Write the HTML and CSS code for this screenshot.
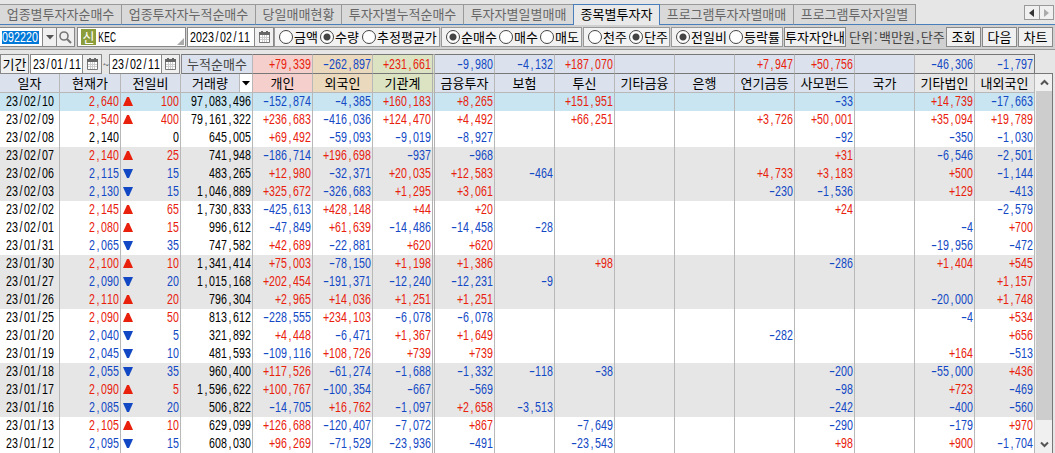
FILE: index.html
```html
<!DOCTYPE html>
<html lang="ko">
<head>
    <meta charset="UTF-8">
    <title>종목별투자자</title>
    <link rel="stylesheet" href="styles.css">
</head>
<body>
    <div class="tabs">
        <div class="tab t1">업종별투자자순매수</div>
        <div class="tab t2">업종투자자누적순매수</div>
        <div class="tab t3">당일매매현황</div>
        <div class="tab t4">투자자별누적순매수</div>
        <div class="tab t5">투자자별일별매매</div>
        <div class="tab t6 active">종목별투자자</div>
        <div class="tab t7">프로그램투자자별매매</div>
        <div class="tab t8">프로그램투자자일별</div>
        <div class="tab-fill">
            <div class="tab-nav">
                <span><svg width="5" height="8"><path d="M5 0V8L0 4z" fill="#333"/></svg></span>
                <span><svg width="5" height="8"><path d="M0 0V8L5 4z" fill="#aaa"/></svg></span>
            </div>
        </div>
    </div>

    <div class="toolbar">
        <div class="box code"><span class="selected"><span class="num" data-num="092220"></span></span></div>
        <div class="box drop"><svg width="8" height="5"><path d="M0 0H8L4 4.5z" fill="#555"/></svg></div>
        <div class="box search"><svg width="13" height="13"><circle cx="5" cy="5" r="4" fill="none" stroke="#777" stroke-width="1.6"/><path d="M8 8L12 12" stroke="#777" stroke-width="2.2"/></svg></div>
        <div class="box name"><span class="badge">신</span><span class="num latin" data-num="KEC"></span><i class="corner"></i></div>
        <div class="box date"><span class="num" data-num="2023/02/11"></span></div>
        <div class="box cal"><svg width="11" height="12"><use href="#calendar"/></svg></div>

        <div class="group g1">
            <label class="radio r41">금액</label><label class="radio r42 on">수량</label><label class="radio">추정평균가</label>
        </div>
        <div class="group g2">
            <label class="radio r53 on">순매수</label><label class="radio r41">매수</label><label class="radio">매도</label>
        </div>
        <div class="group g3">
            <label class="radio r41">천주</label><label class="radio on">단주</label>
        </div>
        <div class="group g4">
            <label class="radio r53 on">전일비</label><label class="radio">등락률</label>
        </div>
        <div class="btn info">투자자안내</div>
        <div class="unit"><span>단위</span><span class="half">:</span><span>백만원</span><span class="half">,</span><span>단주</span></div>
        <div class="btn">조회</div>
        <div class="btn">다음</div>
        <div class="btn last">차트</div>
    </div>

    <div class="content">
        <table class="grid">
            <colgroup>
                <col class="w60"><col class="w61"><col class="w60"><col class="w72">
                <col class="w60"><col class="w60"><col class="w62"><col class="w60">
                <col class="w60"><col class="w60"><col class="w60"><col class="w60">
                <col class="w60"><col class="w60"><col class="w60"><col class="w60"><col class="w60">
            </colgroup>
            <thead>
                <tr class="total" id="total">
                    <td colspan="3" class="period">
                        <div class="period-row">
                            <div class="btn term">기간</div>
                            <div class="box pdate"><span class="num" data-num="23/01/11"></span></div>
                            <div class="box pcal"><svg width="11" height="12"><use href="#calendar"/></svg></div>
                            <span class="tilde">~</span>
                            <div class="box pdate"><span class="num" data-num="23/02/11"></span></div>
                            <div class="box pcal"><svg width="11" height="12"><use href="#calendar"/></svg></div>
                        </div>
                    </td>
                    <td class="sum-label">누적순매수</td>
                </tr>
                <tr class="head">
                    <th>일자</th><th>현재가</th><th>전일비</th>
                    <th class="volume"><div><span>거래량</span><b><svg width="8" height="5"><path d="M0 0H8L4 4.5z"/></svg></b></div></th>
                    <th class="pink">개인</th><th class="tan">외국인</th><th class="green">기관계</th>
                    <th>금융투자</th><th>보험</th><th>투신</th><th>기타금융</th><th>은행</th>
                    <th>연기금등</th><th>사모펀드</th><th>국가</th>
                    <th class="gray">기타법인</th><th class="gray">내외국인</th>
                </tr>
            </thead>
            <tbody id="rows"></tbody>
        </table>
        <div class="scroll">
            <div class="arrow"><svg width="9" height="7"><path d="M1 5.5L4.5 2L8 5.5" fill="none" stroke="#555" stroke-width="2"/></svg></div>
            <div class="thumb"></div>
            <div class="arrow down"><svg width="9" height="7"><path d="M1 1.5L4.5 5L8 1.5" fill="none" stroke="#555" stroke-width="2"/></svg></div>
        </div>
    </div>

    <svg class="defs" width="0" height="0">
        <symbol id="calendar" viewBox="0 0 11 12">
            <path d="M.5 2.5H10.5V11.5H.5z" fill="#fff" stroke="#777"/>
            <path d="M0 1H11V4H0zM2 0H4V2H2zM7 0H9V2H7z" fill="#666"/>
            <path d="M3.5 4V11M5.5 4V11M7.5 4V11M1 6.5H10M1 8.5H10" stroke="#ccc"/>
        </symbol>
    </svg>
    <script src="script.js"></script>
</body>
</html>
```
FILE: styles.css
```css
* {
    box-sizing: border-box;
}

body {
    margin: 0;
    width: 1055px;
    height: 453px;
    overflow: hidden;
    background: #e6e6e6;
    color: #000;
    font-family: "Noto Sans CJK KR", sans-serif;
    font-size: 13px;
    line-height: 18px;
    white-space: nowrap;
}

svg {
    display: block;
}

.defs {
    position: absolute;
}

/* tabs */
.tabs {
    display: flex;
    height: 25px;
    padding-top: 4px;
}

.tab {
    height: 21px;
    border-top: 1px solid #999;
    border-right: 1px solid #999;
    border-bottom: 1px solid #4a7ebb;
    background: #d9d9d9;
    color: #666;
    text-align: center;
}

.t1 { width: 122px; }
.t2 { width: 134px; }
.t3 { width: 86px; }
.t4 { width: 122px; }
.t5 { width: 109px; border-right: 0; }
.t6 { width: 87px; }
.t7 { width: 134px; }
.t8 { width: 122px; }

.tab.active {
    border: 1px solid #4a7ebb;
    border-bottom: 0;
    background: #e9e9e9;
    color: #000;
}

.tab-fill {
    flex: 1;
    display: flex;
    justify-content: flex-end;
    padding: 1px 1px 0 0;
    border-bottom: 1px solid #4a7ebb;
}

.tab-nav {
    display: flex;
    width: 30px;
    height: 15px;
    border: 1px solid #999;
    background: #f0f0f0;
}

.tab-nav span {
    flex: 1;
    display: flex;
    align-items: center;
    justify-content: center;
}

.tab-nav span + span {
    border-left: 1px solid #999;
}

/* digits sit in 6px wide cells */
.num {
    display: inline-flex;
    font-family: "Liberation Sans", sans-serif;
    font-size: 14.4px;
}

.num i {
    width: 6px;
    display: flex;
    justify-content: center;
    font-style: normal;
    transform: scaleX(0.74);
}

.num .minus {
    transform: scaleX(1.25);
}

.latin i {
    transform: scaleX(0.58);
}

/* toolbar */
.toolbar {
    display: flex;
    height: 25px;
    padding-top: 2px;
    background: #d0d0d0;
    border-bottom: 1px solid #999;
}

.box {
    display: flex;
    align-items: center;
    height: 20px;
    border: 1px solid #888;
    background: #fff;
}

.code {
    width: 43px;
    border-left: 0;
    padding-left: 2px;
}

.selected {
    display: flex;
    height: 13px;
    align-items: center;
    background: #0078d7;
    color: #fff;
    width: 37px;
}

.drop {
    width: 14px;
    border-left: 0;
    justify-content: center;
    background: #f0f0f0;
}

.search {
    width: 18px;
    border-left: 0;
    margin-right: 2px;
    justify-content: center;
    background: #f0f0f0;
}

.name {
    width: 109px;
    padding-left: 3px;
    position: relative;
}

.badge {
    width: 15px;
    height: 16px;
    margin-right: 2px;
    background: #8c9e3c;
    color: #fff;
    line-height: 15px;
    text-align: center;
}

.corner {
    position: absolute;
    right: 1px;
    bottom: 1px;
    border-left: 7px solid transparent;
    border-bottom: 7px solid #aaa;
}

.date {
    width: 68px;
    margin-left: 1px;
    padding-left: 2px;
}

.cal {
    width: 19px;
    border-left: 0;
    background: #f0f0f0;
    justify-content: center;
}

.group {
    display: flex;
    align-items: center;
    height: 20px;
    padding-left: 4px;
    margin-right: 1px;
    border: 1px solid #999;
    background: #f2f2f2;
}

.g1 { width: 166px; }
.g2 { width: 141px; }
.g3 { width: 87px; }
.g4 { width: 112px; }

.radio {
    display: flex;
    align-items: center;
    height: 18px;
}

.r41 { width: 41px; }
.r42 { width: 42px; }
.r53 { width: 53px; }

.radio::before {
    content: "";
    flex: none;
    width: 12px;
    height: 12px;
    margin-right: 1px;
    border: 1px solid #444;
    border-radius: 50%;
    background: #fff;
}

.radio.on::before {
    background: radial-gradient(circle, #444 3px, #fff 4px);
}

.btn {
    width: 35px;
    height: 20px;
    margin-right: 1px;
    border: 1px solid #888;
    background: #f0f0f0;
    text-align: center;
}

.info {
    width: 62px;
}

.last {
    margin-right: 0;
}

.unit {
    display: flex;
    width: 99px;
    padding-left: 2px;
    color: #444;
    line-height: 20px;
}

.half {
    width: 6px;
    text-align: center;
}

/* table */
.content {
    display: flex;
    align-items: flex-start;
    padding-top: 4px;
}

.grid {
    width: 1035px;
    table-layout: fixed;
    border-collapse: separate;
    border-spacing: 0;
}

.w60 { width: 60px; }
.w61 { width: 61px; }
.w62 { width: 62px; }
.w72 { width: 72px; }

td, th {
    height: 18px;
    padding: 0 1.5px 0 0;
    border-right: 1px solid #b8b8b8;
    font-weight: normal;
    text-align: right;
    line-height: 18px;
    overflow: hidden;
}

td .num, td > div {
    vertical-align: top;
}

tbody .num {
    line-height: 16px;
}

tr > .double {
    border-right: 3px double #b0b0b0;
}

.total td {
    height: 20px;
    border-top: 1px solid #777;
    border-bottom: 1px solid #777;
    background: #dbe2ed;
}

.total td:last-child {
    border-right-color: #777;
}

.head th {
    height: 19px;
    padding: 0;
    border-bottom: 1px solid #b8b8b8;
    background: #dbe2ed;
    text-align: center;
}

.total .period {
    padding: 0;
    border: 0;
    background: #e6e6e6;
}

.period-row {
    display: flex;
}

.term {
    width: 29px;
}

.pdate {
    width: 53px;
    padding-left: 2px;
}

.pcal {
    width: 19px;
    border-left: 0;
    background: #f0f0f0;
    justify-content: center;
}

.pcal:last-child {
    width: 18px;
}

.tilde {
    width: 7px;
    color: #444;
    font-size: 11px;
    line-height: 20px;
}

.total .sum-label {
    color: #444;
    text-align: center;
    padding: 0;
    border-left: 1px solid #888;
}

.volume div {
    display: flex;
    height: 18px;
}

.volume span {
    flex: 1;
}

.volume b {
    display: flex;
    width: 13px;
    align-items: center;
    justify-content: center;
    background: #fff;
    border-left: 1px solid #b8b8b8;
}

.grid .pink { background: #f5cfcb; }
.grid .tan { background: #ebd9bd; }
.grid .green { background: #dbe3c2; }
.grid .gray { background: #e6e6e6; }

tbody tr { background: #fff; }
tbody tr.shade { background: #e6e6e6; }
tbody tr.current { background: #c8e5f1; }

tbody td:first-child {
    padding-right: 5px;
}

.up { color: #e8200c; }
.down-value { color: #1248c4; }

.change {
    display: flex;
    height: 18px;
    justify-content: space-between;
    padding-left: 2px;
}

.change::before {
    content: "";
    width: 10px;
    height: 9px;
    margin-top: 4px;
}

.up .change::before {
    background: #e8200c;
    clip-path: polygon(40% 0, 60% 0, 100% 100%, 0 100%);
}

.down-value .change::before {
    background: #1248c4;
    clip-path: polygon(0 0, 100% 0, 60% 100%, 40% 100%);
}

/* scrollbar */
.scroll {
    width: 18px;
    height: 380px;
    margin-top: 19px;
    padding-left: 1px;
    border-top: 1px solid #777;
    border-right: 1px solid #777;
    background: #f0f0f0;
}

.arrow {
    display: flex;
    height: 17px;
    align-items: center;
    justify-content: center;
}

.thumb {
    height: 329px;
    background: #cdcdcd;
}

.arrow.down {
    margin-top: 16px;
}
```
FILE: script.js
```js
const totals = ["+79,339", "-262,897", "+231,661", "-9,980", "-4,132", "+187,070", "", "", "+7,947", "+50,756", "", "-46,306", "-1,797"];

// date, price, direction, change, volume, then 13 investor columns
const data = `
23/02/10|2,640|u|100|97,083,496|-152,874|-4,385|+160,183|+8,265||+151,951||||-33||+14,739|-17,663
23/02/09|2,540|u|400|79,161,322|+236,683|-416,036|+124,470|+4,492||+66,251|||+3,726|+50,001||+35,094|+19,789
23/02/08|2,140||0|645,005|+69,492|-59,093|-9,019|-8,927||||||-92||-350|-1,030
23/02/07|2,140|u|25|741,948|-186,714|+196,698|-937|-968||||||+31||-6,546|-2,501
23/02/06|2,115|d|15|483,265|+12,980|-32,371|+20,035|+12,583|-464||||+4,733|+3,183||+500|-1,144
23/02/03|2,130|d|15|1,046,889|+325,672|-326,683|+1,295|+3,061|||||-230|-1,536||+129|-413
23/02/02|2,145|u|65|1,730,833|-425,613|+428,148|+44|+20||||||+24|||-2,579
23/02/01|2,080|u|15|996,612|-47,849|+61,639|-14,486|-14,458|-28|||||||-4|+700
23/01/31|2,065|d|35|747,582|+42,689|-22,881|+620|+620||||||||-19,956|-472
23/01/30|2,100|u|10|1,341,414|+75,003|-78,150|+1,198|+1,386||+98||||-286||+1,404|+545
23/01/27|2,090|d|20|1,015,168|+202,454|-191,371|-12,240|-12,231|-9||||||||+1,157
23/01/26|2,110|u|20|796,304|+2,965|+14,036|+1,251|+1,251||||||||-20,000|+1,748
23/01/25|2,090|u|50|813,612|-228,555|+234,103|-6,078|-6,078||||||||-4|+534
23/01/20|2,040|d|5|321,892|+4,448|-6,471|+1,367|+1,649|||||-282||||+656
23/01/19|2,045|d|10|481,593|-109,116|+108,726|+739|+739||||||||+164|-513
23/01/18|2,055|d|35|960,400|+117,526|-61,274|-1,688|-1,332|-118|-38||||-200||-55,000|+436
23/01/17|2,090|u|5|1,596,622|+100,767|-100,354|-667|-569||||||-98||+723|-469
23/01/16|2,085|d|20|506,822|-14,705|+16,762|-1,097|+2,658|-3,513|||||-242||-400|-560
23/01/13|2,105|u|10|629,099|+126,688|-120,407|-7,072|+867||-7,649||||-290||-179|+970
23/01/12|2,095|d|15|608,030|+96,269|-71,529|-23,936|-491||-23,543||||+98||+900|-1,704
`.trim().split("\n").map(line => line.split("|"));

function chars(text) {
    return [...text].map(c => `<i${c === "-" ? ' class="minus"' : ""}>${c}</i>`).join("");
}

function num(text) {
    return text ? `<span class="num">${chars(text)}</span>` : "";
}

function color(value) {
    if (value[0] === "+") return "up";
    if (value[0] === "-") return "down-value";
    return "";
}

document.querySelectorAll("[data-num]").forEach(el => {
    el.innerHTML = chars(el.dataset.num);
});

const columnClass = ["pink", "tan", "green double", "", "", "", "", "", "", "", "", "gray", "gray"];
const heads = document.querySelectorAll(".head th");
heads[6].classList.add("double");

document.getElementById("total").insertAdjacentHTML("beforeend",
    totals.map((v, i) => `<td class="${columnClass[i]} ${color(v)}">${num(v)}</td>`).join(""));

document.getElementById("rows").innerHTML = data.map((row, n) => {
    const [date, price, dir, change, volume, ...values] = row;
    const trend = dir === "u" ? "up" : dir === "d" ? "down-value" : "";
    const rowClass = n === 0 ? "current" : Math.floor(n / 3) % 2 ? "shade" : "";
    return `<tr class="${rowClass}">
        <td>${num(date)}</td>
        <td class="${trend}">${num(price)}</td>
        <td class="${trend}"><div class="change">${num(change)}</div></td>
        <td>${num(volume)}</td>
        ${values.map((v, i) => `<td class="${i === 2 ? "double" : ""} ${color(v)}">${num(v)}</td>`).join("")}
    </tr>`;
}).join("");
```
